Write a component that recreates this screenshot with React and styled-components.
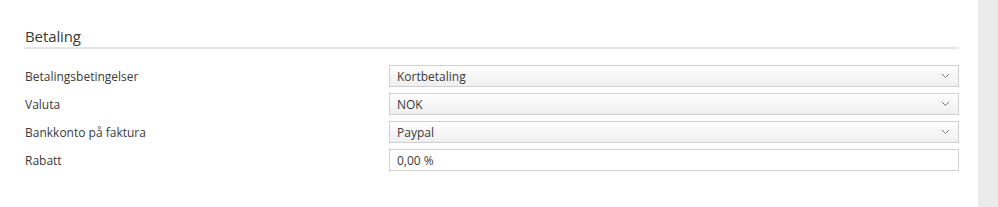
import styled, { createGlobalStyle } from "styled-components";

const GlobalStyle = createGlobalStyle`
  body {
    margin: 0;
    background: #fff;
    font-family: "Open Sans", "Liberation Sans", sans-serif;
    color: #3a3a3a;
  }
`;

const fields = [
  { label: "Betalingsbetingelser", value: "Kortbetaling", select: true },
  { label: "Valuta", value: "NOK", select: true },
  { label: "Bankkonto på faktura", value: "Paypal", select: true },
  { label: "Rabatt", value: "0,00 %", select: false },
];

function Chevron() {
  return (
    <svg width="9" height="6" viewBox="0 0 9 6">
      <path d="M1 1 L4.5 4.5 L8 1" fill="none" stroke="#777" strokeWidth="1" />
    </svg>
  );
}

export default function App() {
  return (
    <>
      <GlobalStyle />
      <Page>
        <Main>
          <SectionTitle>Betaling</SectionTitle>
          <Form>
            {fields.map((f) => (
              <Row key={f.label}>
                <Label>{f.label}</Label>
                <Field select={f.select ? 1 : 0}>
                  <span>{f.value}</span>
                  {f.select && <Chevron />}
                </Field>
              </Row>
            ))}
          </Form>
        </Main>
        <Sidebar />
      </Page>
    </>
  );
}

const Page = styled.div`
  display: flex;
  height: 207px;
`;

const Main = styled.div`
  flex: 1;
  padding: 26px 19px 0 24px;
`;

const SectionTitle = styled.div`
  font-size: 15px;
  line-height: 20px;
  letter-spacing: -0.1px;
  padding: 0 0 0 1px;
  height: 21px;
  border-bottom: 2px solid #e6e6e6;
`;

const Form = styled.div`
  display: flex;
  flex-direction: column;
  gap: 6px;
  margin-top: 16px;
`;

const Row = styled.div`
  display: grid;
  grid-template-columns: 365px 1fr;
  align-items: center;
  height: 22px;
`;

const Label = styled.div`
  font-size: 12px;
  padding-left: 1px;
`;

const Field = styled.div`
  display: flex;
  align-items: center;
  justify-content: space-between;
  height: 22px;
  box-sizing: border-box;
  border: 1px solid #d0d0d0;
  padding: 0 8px 0 7px;
  font-size: 12px;
  background: ${(p) =>
    p.select ? "linear-gradient(#ffffff, #efefef)" : "#fff"};
`;

const Sidebar = styled.div`
  width: 20px;
  background: #ebebeb;
`;
